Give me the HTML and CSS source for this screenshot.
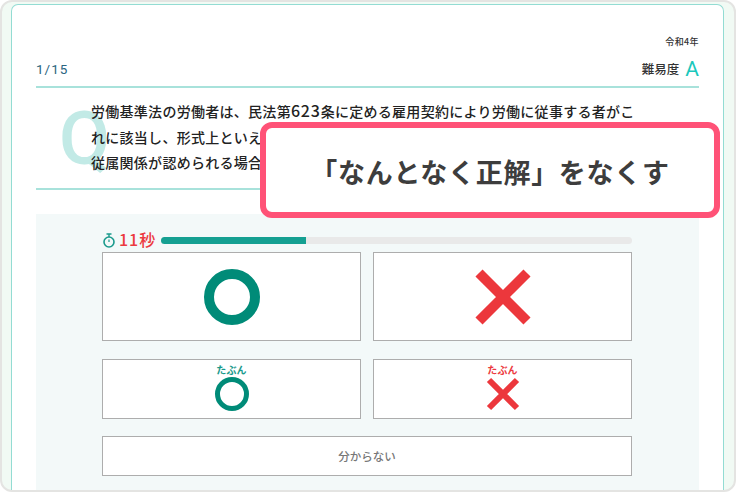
FILE: index.html
```html
<!doctype html>
<html lang="ja">
<head>
	<meta charset="UTF-8">
	<title>過去問</title>
	<link rel="stylesheet" href="styles.css">
</head>
<body>
	<div class="frame">
		<div class="sheet">
			<div class="year">令和4年</div>
			<div class="head">
				<span class="count">1/15</span>
				<span class="level">難易度<b>A</b></span>
			</div>
			<div class="question">
				<span class="q-mark">Q</span>
				<p>労働基準法の労働者は、民法第<span class="num">623</span>条に定める雇用契約により労働に従事する者がこ<br>れに該当し、形式上といえ<br>従属関係が認められる場合</p>
			</div>
			<div class="panel">
				<div class="timer">
					<svg class="watch" width="14" height="15" viewBox="0 0 14 15"><path d="M4.5 1h5M7 1v3" stroke="#1a9a8c" stroke-width="1.4" fill="none"/><circle cx="7" cy="9" r="5" stroke="#1a9a8c" stroke-width="1.6" fill="none"/><path d="M7 6.5V9" stroke="#1a9a8c" stroke-width="1.2"/></svg>
					<span class="sec">11秒</span>
					<div class="bar"><div class="bar-on" style="width:30.8%"></div></div>
				</div>
				<div class="row row-big">
					<div class="choice"><span class="ring ring-big"></span></div>
					<div class="choice">
						<svg width="56" height="56" viewBox="0 0 56 56"><path d="M4 4L52 52M52 4L4 52" stroke="#ec373c" stroke-width="10"/></svg>
					</div>
				</div>
				<div class="row row-small">
					<div class="choice choice-col">
						<span class="maybe maybe-ok">たぶん</span>
						<span class="ring ring-small"></span>
					</div>
					<div class="choice choice-col">
						<span class="maybe maybe-ng">たぶん</span>
						<svg width="34" height="34" viewBox="0 0 34 34"><path d="M3 3L31 31M31 3L3 31" stroke="#ec373c" stroke-width="6"/></svg>
					</div>
				</div>
				<div class="choice choice-none">分からない</div>
			</div>
		</div>
		<div class="callout">「なんとなく正解」をなくす</div>
	</div>
</body>
</html>
```

FILE: styles.css
```css
*{margin:0;padding:0;box-sizing:border-box;}
body{
	width:736px;
	height:492px;
	overflow:hidden;
	background:#fff;
	font-family:"Noto Sans CJK JP","Noto Sans",sans-serif;
}
.frame{
	position:relative;
	width:736px;
	height:492px;
	padding:2px 10px 0 9px;
	background:#f1faf4;
	border:2px solid #e4e4e2;
	border-radius:12px;
}
.sheet{
	height:100%;
	padding:30px 24px 0 24px;
	background:#fff;
	border:1px solid #93dcd3;
	border-bottom:0;
	border-radius:7px 7px 0 0;
}
.year{
	height:14px;
	font-size:9px;
	line-height:14px;
	font-weight:500;
	letter-spacing:.4px;
	text-align:right;
	color:#333;
}
.head{
	display:flex;
	justify-content:space-between;
	align-items:center;
	height:39px;
	padding-top:2px;
	border-bottom:2px solid #a8e2db;
}
.count{
	font-family:"Roboto",sans-serif;
	font-size:13.5px;
	letter-spacing:1px;
	color:#2a6580;
}
.level{
	display:flex;
	align-items:center;
	font-size:12.5px;
	font-weight:500;
	color:#333;
}
.level b{
	margin-left:6px;
	font-family:"Roboto",sans-serif;
	font-size:21px;
	line-height:20px;
	font-weight:400;
	color:#1cc8bc;
}
.question{
	position:relative;
	height:102px;
	padding:11px 0 0 55px;
	border-bottom:2px solid #a8e2db;
}
.question p{
	position:relative;
	font-size:14px;
	line-height:25.5px;
	letter-spacing:.28px;
	font-weight:500;
	color:#222;
}
.num{
	font-size:16px;
	line-height:1;
	letter-spacing:.8px;
}
.q-mark{
	position:absolute;
	left:23px;
	top:6px;
	font-family:"Roboto",sans-serif;
	font-size:74px;
	line-height:90px;
	font-weight:500;
	color:#c2eae6;
}
.panel{
	height:276px;
	margin-top:24px;
	padding:18px 67px 0 66px;
	background:#f3f9f9;
}
.timer{
	display:flex;
	align-items:center;
	height:17px;
}
.sec{
	margin-left:3px;
	padding-bottom:3px;
	font-size:16px;
	font-weight:500;
	letter-spacing:1px;
	color:#ec3a40;
}
.bar{
	flex:1;
	height:7px;
	margin-left:5px;
	border-radius:4px;
	background:#e9e9e9;
	overflow:hidden;
}
.bar-on{
	height:100%;
	background:#14a092;
}
.row{
	display:flex;
	gap:12px;
}
.row-big{
	height:89px;
	margin-top:3px;
}
.row-small{
	height:60px;
	margin-top:18px;
}
.choice{
	flex:1;
	display:flex;
	align-items:center;
	justify-content:center;
	background:#fff;
	border:1px solid #adadad;
}
.choice-col{
	flex-direction:column;
	justify-content:flex-start;
	padding-top:3px;
}
.choice-none{
	height:40px;
	margin-top:17px;
	font-size:11.5px;
	font-weight:500;
	color:#777;
}
.ring{
	display:block;
	border-radius:50%;
	border-style:solid;
	border-color:#008b78;
}
.ring-big{
	width:56px;
	height:56px;
	border-width:10px;
}
.ring-small{
	width:34px;
	height:34px;
	border-width:5px;
}
.maybe{
	font-size:10px;
	line-height:14px;
	font-weight:700;
	letter-spacing:.2px;
}
.maybe-ok{color:#1a9a8c;}
.maybe-ng{color:#ec3a40;}
.callout{
	position:absolute;
	left:258px;
	top:120px;
	width:460px;
	height:96px;
	display:flex;
	align-items:center;
	justify-content:center;
	padding-top:2px;
	background:#fff;
	border:6px solid #ff5277;
	border-radius:12px;
	font-size:27px;
	font-weight:700;
	letter-spacing:.7px;
	color:#3d3d3d;
}
```
